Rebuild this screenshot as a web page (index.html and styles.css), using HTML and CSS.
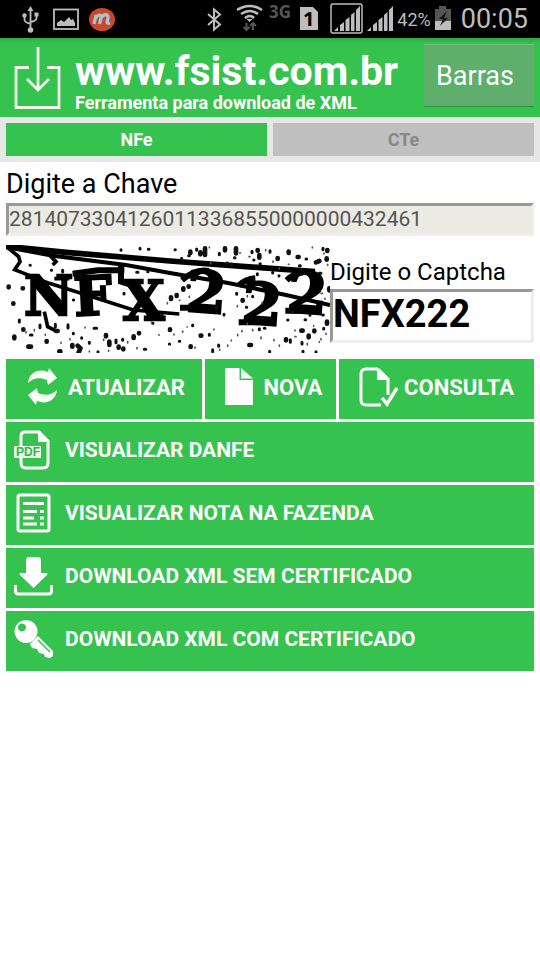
FILE: index.html
```html
<!DOCTYPE html>
<html lang="pt-BR">
<head>
<meta charset="utf-8">
<meta name="viewport" content="width=device-width, initial-scale=1">
<title>FSist - Ferramenta para download de XML</title>
<link rel="stylesheet" href="styles.css">
</head>
<body>
<div class="status">
  <svg class="status-left" width="120" height="38" viewBox="0 0 120 38" aria-hidden="true">
    <g fill="none" stroke="#bdbdbd" stroke-width="1.8">
      <path d="M30.500 9V30M24.500 16v4q0 2 6 4M36.500 15v3q0 3-6 4"/>
      <rect x="54" y="9.500" width="24" height="19.500"/>
    </g>
    <g fill="#bdbdbd"><path d="M30.500 6l3 5h-6zM34.500 12.500h4v4h-4z"/><circle cx="24.500" cy="15.500" r="2.200"/><circle cx="30.500" cy="30" r="2.800"/><path d="M57 26v-3l4-3 3 2 5-5 2 3 2-1 2 4v3z"/></g>
    <ellipse cx="102" cy="19.500" rx="13" ry="11.500" fill="#c9472e"/>
    <path d="M94 24l2-9M96 18c2-4 6-4 5 0l-1.500 6M101 18c3-5 8-4 7 0l-1 4q0 2 3 1" fill="none" stroke="#a9c4cf" stroke-width="3.200"/>
  </svg>
  <div class="status-right">
    <svg width="192" height="38" viewBox="202 0 192 38" aria-hidden="true">
      <path d="M208 14l12 10.500-6 5V9.500l6 5L208 25" fill="none" stroke="#bdbdbd" stroke-width="2"/>
      <g fill="none" stroke="#bdbdbd" stroke-width="2.600"><path d="M237 10q13-8 25 0M241 14q9-6 17 0M245 18q5-4 9 0"/></g>
      <path d="M246.500 19h6l-3 3z" fill="#bdbdbd"/>
      <path d="M246.500 23v6M243.500 27l3 3 3-3M253 30v-6M250 26l3-3 3 3" fill="none" stroke="#555" stroke-width="2"/>
      <text class="net" x="269" y="18">3G</text>
      <path d="M300 7h13l5 5v18h-18z" fill="#bdbdbd"/>
      <text class="sim" x="303" y="26">1</text>
      <rect x="331" y="4" width="31" height="29" rx="2" fill="none" stroke="#bdbdbd" stroke-width="1.500"/>
      <g fill="#bdbdbd"><path id="bars" d="M334 31l4-4v4zM340 25l4-3v9h-4zM345.500 20l4-3v14h-4zM351 15l3.500-3v19H351zM356 10l4-4v25h-4z"/><use href="#bars" x="33"/></g>
    </svg>
    <span class="percent">42%</span>
    <svg width="20" height="38" viewBox="0 0 20 38" aria-hidden="true">
      <path d="M1 9h4V6h7v3h5v13H1z" fill="#555"/><path d="M1 21h16v9H1z" fill="#bdbdbd"/><path d="M13 11l-8 8h4l-3 7 8-8h-4z" fill="#111"/>
    </svg>
    <span class="clock">00:05</span>
  </div>
</div>
<header class="header">
  <svg class="logo" width="48" height="64" viewBox="0 0 48 64" aria-hidden="true">
    <path d="M15 21.500H2V61.500H45V21.500H33M24 1V43M13 33l11 11 11-11" fill="none" stroke="#effbe9" stroke-width="2.800"/>
  </svg>
  <div class="brand">
    <h1>www.fsist.com.br</h1>
    <p>Ferramenta para download de XML</p>
  </div>
  <button class="barras" type="button">Barras</button>
</header>
<nav class="tabs">
  <button class="tab active" type="button">NFe</button>
  <button class="tab" type="button">CTe</button>
</nav>
<main class="main">
  <label class="key-label" for="chave">Digite a Chave</label>
  <input class="key" id="chave" type="text" value="28140733041260113368550000000432461" readonly>
  <div class="captcha-row">
    <svg class="captcha" width="324" height="108" viewBox="0 0 972 324" role="img" aria-label="Captcha">
      <g class="letters">
        <text x="54" y="210">N</text>
        <text x="206" y="213" rotate="-3">F</text>
        <text x="350" y="226">X</text>
        <text class="digit" x="538" y="198" rotate="4">2</text>
        <text class="digit" x="704" y="234" rotate="4">2</text>
        <text class="digit" x="840" y="200" rotate="4">2</text>
      </g>
      <g fill="none" stroke="#000">
        <path stroke-width="17" d="M0 4L180 22L492 48L927 80"/>
        <path stroke-width="12" d="M20 10L140 32L360 60L492 84L667 114L840 150L972 180"/>
        <path stroke-width="11" d="M5 8L38 35L42 50L26 74L130 115L225 145L382 195L520 207M132 32l18 18-10 10M115 200l10 45 28 14M145 101h45"/>
        <path stroke-width="18" d="M200 86l75-10h80M345 60v50l55 18M528 106q40-36 80-28M522 188h60M698 122q20-20 50-22M698 232h60M842 106q20-20 50-24M838 197h60"/>
      </g>
      <g fill="none" stroke="#111" stroke-linecap="round">
        <path stroke-width="14" d="M8 125v2M50 130h1M22 175v1M52 253v1M25 275v5M67 305h8M122 288v2M150 258h5M160 319h3M199 300v5M215 302l8 8-5 12M300 270v4M310 290v10M338 305v3M352 311v2M383 274v5M399 264v1M492 253v2M554 304v2M584 272h2M730 300h5M840 283v3M886 257h4M908 272v5M925 257v2M848 20v4M875 36h3M930 52l10-4M815 39v3M760 30v8M690 10v15M597 10v20M583 22v6M553 20v4M657 10v6M964 15v3M962 40v4M970 130v6M963 230v6M755 15v2M495 157v5M512 150v3M532 130v4M548 124v1M710 165v2"/>
        <path stroke-width="9" d="M72 61h1M136 76h1M170 76v5M202 165h1M354 145v2M425 80h1M392 82h4M40 225v6M73 270h5M102 240v8M148 238v8M186 239v10M202 265v1M227 278v2M264 250h8M250 292v3M276 320v2M330 285v8M350 283v3M415 313h4M440 235h1M468 210h1M490 297h1M520 289h1M620 314v6M638 300v4M610 268v3M632 186v4M654 208v2M560 240v2M760 251v3M775 250h2M791 319v2M853 284v8M888 292v5M891 319v2M897 224h2M845 225h1M930 320v3M953 250v2M950 210h2M940 85h5M951 10v4M900 42h2M880 62h3M792 17v5M762 56h1M743 45h1M738 19v4M685 38h2M677 57v4M640 25v4M663 54h1M572 12v4M548 32h2M527 40v3M507 14h1M345 14v2M402 10v2M427 13h2M692 145v3M740 154v1M721 187h1M754 86v3M800 82v2M819 92v1M860 200v1M912 210v1"/>
        <path stroke-width="5" stroke="#555" d="M60 260v4M85 254v4M118 268v3M165 292v3M192 281v4M237 246v3M250 318v3M293 282v4M308 316v3M365 290v4M393 308v4M436 231h2M459 269v2M504 267v3M530 258v4M543 246h1M567 306v4M624 252v3M641 313v3M665 300v4M676 285v2M695 268v4M708 257v3M724 235v3M740 253v4M765 276v5M804 284v3M820 300v4M867 255v3M867 275h3M904 295v5M923 242v2M940 290v2M960 265v3M945 281v3M614 52v4M610 6v2M701 24h3M729 35h3M779 14v3M801 48v4M820 69v3M847 58h2M919 6v3M954 24v3M965 58v3M945 145h4M957 160v3M694 182v3M724 152v3M768 173v3M550 154v3M520 166h2M484 173v3"/>
      </g>
    </svg>
    <div class="captcha-field">
      <label for="captcha">Digite o Captcha</label>
      <input id="captcha" type="text" value="NFX222">
    </div>
  </div>
  <div class="actions">
    <button class="btn" type="button">
      <svg width="40" height="40" viewBox="0 0 40 40" aria-hidden="true"><g fill="#f8fff5"><path id="arrow" d="M5 16C6 6 15 1 25 5l1-4 8 10-9 7-1-5C16 10 10 11 5 16z"/><use href="#arrow" transform="rotate(180 19.500 19.500)"/></g></svg>
      <span>ATUALIZAR</span>
    </button>
    <button class="btn" type="button">
      <svg width="40" height="40" viewBox="0 0 40 40" aria-hidden="true"><path d="M6 1h14.500v12H34v25H6zM22 1l12 10.500H22z" fill="#fff"/></svg>
      <span>NOVA</span>
    </button>
    <button class="btn" type="button">
      <svg width="40" height="40" viewBox="0 0 40 40" aria-hidden="true"><path d="M19 2H7Q2 2 2 7V33q0 5 5 5H22M19 2l10 10v16" fill="none" stroke="#fff" stroke-width="3"/><path d="M18 1l12 12H18z" fill="#fff"/><path d="M23 31l5 6 10-16" fill="none" stroke="#fff" stroke-width="3.500"/></svg>
      <span>CONSULTA</span>
    </button>
  </div>
  <button class="btn row" type="button">
    <svg width="40" height="40" viewBox="0 0 40 40" aria-hidden="true"><path d="M7 16V6Q7 2 11 2H25L34 11V33q0 5-5 5H12q-5 0-5-5V28" fill="none" stroke="#fff" stroke-width="3"/><path d="M24 1l12 11H24z" fill="#fff"/><path d="M0 16h27v12H0z" fill="#e9fbe6"/><text class="pdf" x="2" y="26">PDF</text></svg>
    <span>VISUALIZAR DANFE</span>
  </button>
  <button class="btn row" type="button">
    <svg width="40" height="40" viewBox="0 0 40 40" aria-hidden="true"><rect x="4" y="2" width="31" height="36" rx="2" fill="none" stroke="#fff" stroke-width="3"/><path d="M9 10.500h21M9 18.500h14M26 18.500h4M9 25h11M26 25h4M9 31h14M26 31h4" stroke="#fff" stroke-width="3"/></svg>
    <span>VISUALIZAR NOTA NA FAZENDA</span>
  </button>
  <button class="btn row" type="button">
    <svg width="40" height="40" viewBox="0 0 40 40" aria-hidden="true"><path d="M15 1h9q3 0 3 3v13h6q1 1 0 2L19.500 32 6 19q-1-1 0-2h6V4q0-3 3-3z" fill="#fff"/><path d="M1.500 29v6q0 3 3 3h30q3 0 3-3v-6" fill="none" stroke="#fff" stroke-width="3"/></svg>
    <span>DOWNLOAD XML SEM CERTIFICADO</span>
  </button>
  <button class="btn row" type="button">
    <svg width="40" height="40" viewBox="0 0 40 40" aria-hidden="true"><path fill-rule="evenodd" d="M12 1a11.500 11.500 0 1 0 .1 0zM8 4.500a4 4 0 1 1-.1 0z" fill="#fff"/><path d="M16 25l8-8 15 15v5l-3 2-5-1-1-3-5-1-2-4-5-1z" fill="#fff"/><path d="M24 21l12 12" stroke="#35c24f" stroke-width="1.500"/></svg>
    <span>DOWNLOAD XML COM CERTIFICADO</span>
  </button>
</main>
</body>
</html>
```

FILE: styles.css
```css
* { box-sizing: border-box; }
body {
  margin: 0;
  background: #fff;
  color: #000;
  font-family: Roboto, "Liberation Sans", sans-serif;
}
svg { display: block; flex: none; }
button, input { font-family: inherit; margin: 0; }
.status {
  display: flex;
  justify-content: space-between;
  height: 38px;
  background: #000;
  color: #bdbdbd;
}
.status-right { display: flex; align-items: center; gap: 3px; padding-right: 12px; }
.percent { font-size: 18px; }
.clock { font-size: 27px; padding-left: 4px; }
.net { font: bold 17px "Noto Sans", sans-serif; fill: #555; }
.sim { font: bold 20px "Noto Sans", sans-serif; fill: #000; }
.header {
  display: flex;
  align-items: center;
  height: 79px;
  padding: 0 6px 0 14px;
  background: linear-gradient(#2fa947, #35c24f 5px);
  color: #fff;
}
.brand { flex: 1; padding: 4px 0 0 13px; }
.brand h1 { margin: 0; font-size: 41px; line-height: 46px; }
.brand p { margin: 0; font-size: 18px; font-weight: bold; line-height: 18px; }
.barras {
  width: 110px;
  height: 63px;
  margin-bottom: 4px;
  padding: 0 8px 0 0;
  border: 0;
  border-top: 1px solid #70c47e;
  border-bottom: 1px solid #338c43;
  background: #5daf6b;
  color: #fff;
  font-size: 27px;
}
.tabs { display: flex; gap: 6px; padding: 6px 6px; background: #e7e7e7; }
.tab {
  flex: 1;
  height: 33px;
  padding: 0;
  border: 0;
  background: #c0c0c0;
  color: #888;
  font-size: 18px;
  font-weight: bold;
}
.tab.active { background: #35c24f; color: #fff; }
.main { display: flex; flex-direction: column; gap: 3px; padding: 3px 6px; }
.key-label { padding-top: 3px; font-size: 27px; line-height: 32px; }
.key {
  width: 100%;
  height: 33px;
  padding: 0 0 2px;
  border: 3px solid;
  border-color: #999 #eee #eee #999;
  background: #ebebe4;
  color: #545454;
  font-size: 21px;
}
.captcha-row { display: flex; padding: 6px 0 3px; }
.letters text { font: bold 162px "DejaVu Serif", serif; stroke: #000; stroke-width: 7px; }
.letters .digit { font-size: 172px; }
.captcha-field { display: flex; flex: 1; flex-direction: column; min-width: 0; padding-top: 10px; }
.captcha-field label { font-size: 24px; line-height: 34px; }
.captcha-field input {
  width: 100%;
  height: 54px;
  padding: 0 0 4px;
  border: 3px solid;
  border-color: #999 #eee #eee #999;
  background: #fff;
  color: #000;
  font-size: 38px;
  font-weight: bold;
}
.actions { display: grid; grid-template-columns: 196fr 131fr 195fr; gap: 3px; }
.btn {
  display: flex;
  align-items: center;
  justify-content: center;
  gap: 5px;
  height: 60px;
  padding: 0 0 4px;
  border: 0;
  background: #35c24f;
  color: #fff;
  font-size: 22px;
  font-weight: bold;
}
.row { justify-content: flex-start; gap: 11px; padding-left: 8px; font-size: 21px; }
.pdf { font: bold 12px "Liberation Sans", sans-serif; fill: #35b24f; }
```
